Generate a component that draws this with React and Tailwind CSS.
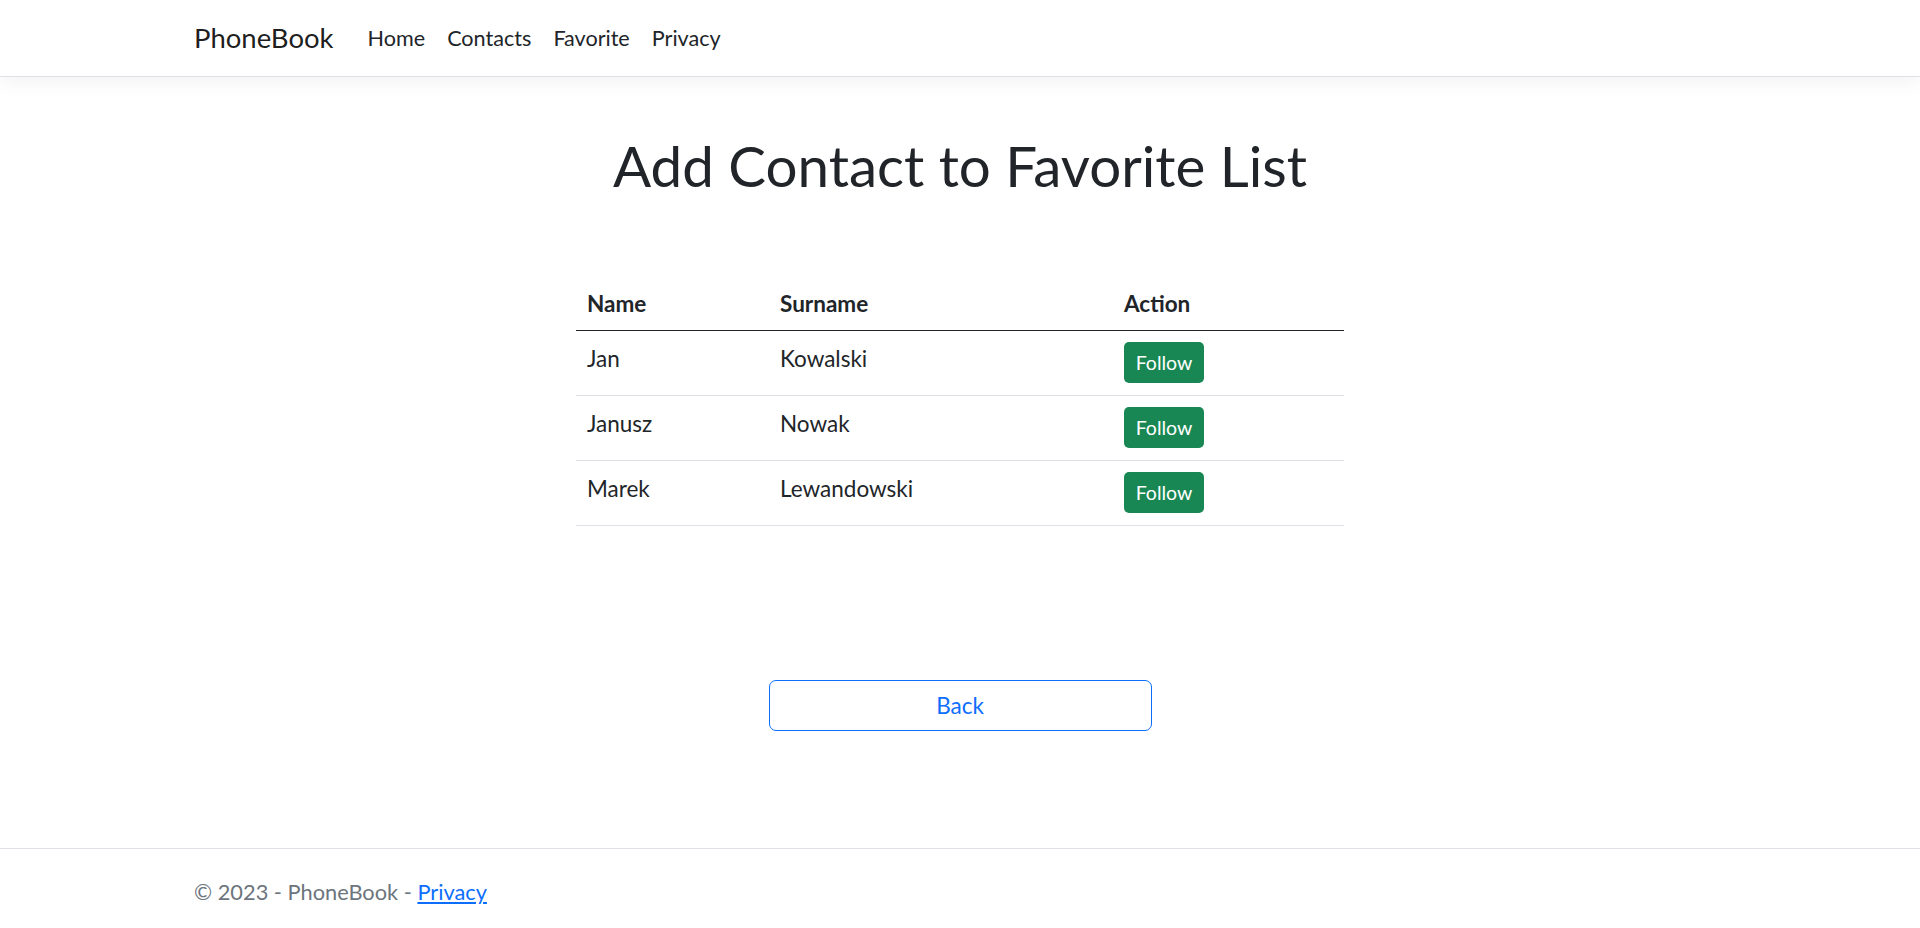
import React from "react"

const contacts = [
    { name: "Jan", surname: "Kowalski" },
    { name: "Janusz", surname: "Nowak" },
    { name: "Marek", surname: "Lewandowski" },
]

export default function App() {
    return (
        <div className="min-h-[928px] bg-white text-[#212529] font-['Lato','Noto_Sans',sans-serif]">
            <nav className="h-[77px] border-b border-[#dee2e6] bg-white shadow-[0_6px_18px_rgba(0,0,0,0.05)]">
                <div className="mx-auto flex h-[76px] w-[1532px] items-center">
                    <a href="#" className="mr-[23px] text-[27.5px] leading-[42px] text-black/90">
                        PhoneBook
                    </a>
                    <ul className="flex items-center">
                        {["Home", "Contacts", "Favorite", "Privacy"].map(item => (
                            <li key={item}>
                                <a href="#" className="block px-[11px] text-[21.6px] leading-[34px] text-[#212529]">
                                    {item}
                                </a>
                            </li>
                        ))}
                    </ul>
                </div>
            </nav>

            <main className="flex flex-col items-center">
                <h1 className="mt-[54px] text-[56.5px] font-normal leading-[68px]">
                    Add Contact to Favorite List
                </h1>

                <table className="mt-[83px] w-[768px] border-collapse text-[22.5px]">
                    <thead>
                        <tr className="border-b border-[#212529]">
                            <th className="w-[193px] pt-[8px] pb-[12px] pl-[11px] text-left font-bold leading-[28px]">Name</th>
                            <th className="w-[343px] pt-[8px] pb-[12px] pl-[11px] text-left font-bold leading-[28px]">Surname</th>
                            <th className="pt-[8px] pb-[12px] pl-[12px] text-left font-bold leading-[28px]">Action</th>
                        </tr>
                    </thead>
                    <tbody>
                        {contacts.map(c => (
                            <tr key={c.surname} className="border-b border-[#dee2e6]">
                                <td className="pt-[11px] pb-[12px] pl-[11px] align-top leading-[33px]">{c.name}</td>
                                <td className="pt-[11px] pb-[12px] pl-[11px] align-top leading-[33px]">{c.surname}</td>
                                <td className="pt-[11px] pb-[12px] pl-[12px] align-top">
                                    <button className="flex h-[41px] w-[80px] items-center justify-center rounded-[5px] bg-[#198754] text-[19.5px] text-white">
                                        Follow
                                    </button>
                                </td>
                            </tr>
                        ))}
                    </tbody>
                </table>

                <button className="mt-[154px] flex h-[51px] w-[383px] items-center justify-center rounded-[7px] border border-[#0d6efd] text-[22.5px] text-[#0d6efd]">
                    Back
                </button>
            </main>

            <footer className="mt-[117px] h-[80px] border-t border-[#dee2e6]">
                <div className="mx-auto w-[1532px] pt-[28px] text-[21.8px] leading-[30px] text-[#6c757d]">
                    © 2023 - PhoneBook - <a href="#" className="text-[#0d6efd] underline">Privacy</a>
                </div>
            </footer>
        </div>
    )
}
